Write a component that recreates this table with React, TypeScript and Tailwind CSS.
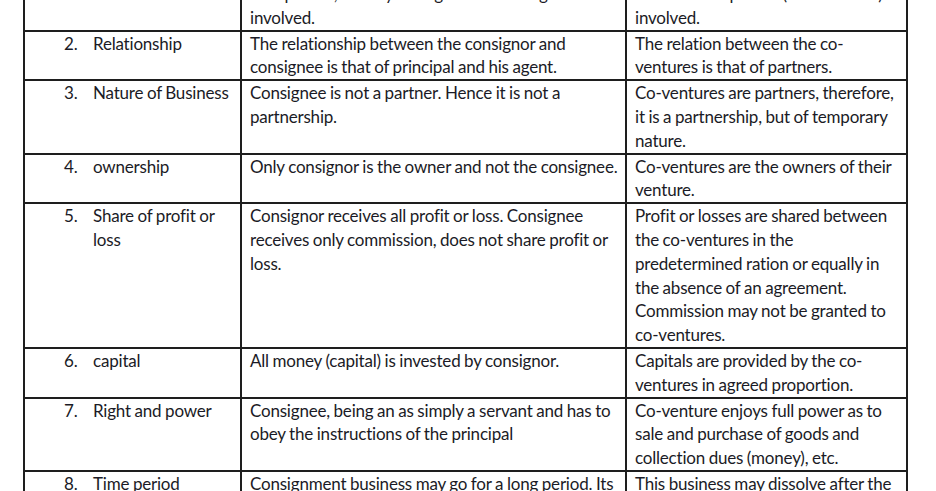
const rows: { n: string; label: string[]; a: string[]; b: string[] }[] = [
  {
    n: "1.",
    label: ["Parties", ""],
    a: ["Two parties, namely consignor and consignee are", "involved."],
    b: ["Two or more parties (co-venturers) are", "involved."],
  },
  {
    n: "2.",
    label: ["Relationship"],
    a: ["The relationship between the consignor and", "consignee is that of principal and his agent."],
    b: ["The relation between the co-", "ventures is that of partners."],
  },
  {
    n: "3.",
    label: ["Nature of Business"],
    a: ["Consignee is not a partner. Hence it is not a", "partnership."],
    b: ["Co-ventures are partners, therefore,", "it is a partnership, but of temporary", "nature."],
  },
  {
    n: "4.",
    label: ["ownership"],
    a: ["Only consignor is the owner and not the consignee."],
    b: ["Co-ventures are the owners of their", "venture."],
  },
  {
    n: "5.",
    label: ["Share of profit or", "loss"],
    a: [
      "Consignor receives all profit or loss. Consignee",
      "receives only commission, does not share profit or",
      "loss.",
    ],
    b: [
      "Profit or losses are shared between",
      "the co-ventures in the",
      "predetermined ration or equally in",
      "the absence of an agreement.",
      "Commission may not be granted to",
      "co-ventures.",
    ],
  },
  {
    n: "6.",
    label: ["capital"],
    a: ["All money (capital) is invested by consignor."],
    b: ["Capitals are provided by the co-", "ventures in agreed proportion."],
  },
  {
    n: "7.",
    label: ["Right and power"],
    a: ["Consignee, being an as simply a servant and has to", "obey the instructions of the principal"],
    b: ["Co-venture enjoys full power as to", "sale and purchase of goods and", "collection dues (money), etc."],
  },
  {
    n: "8.",
    label: ["Time period"],
    a: ["Consignment business may go for a long period. Its", "continuity is not affected."],
    b: ["This business may dissolve after the", "completion of the venture."],
  },
];

const Lines = ({ lines }: { lines: string[] }) => (
  <>
    {lines.map((l, i) => (
      <div key={i} className="whitespace-nowrap h-[23.8px]">
        {l}
      </div>
    ))}
  </>
);

export default function App() {
  return (
    <div
      className="h-[491px] w-[936px] overflow-hidden bg-white text-[#1b1b26] text-[17px] leading-[23.8px] tracking-[-0.2px] [word-spacing:-0.5px]"
      style={{ fontFamily: "Lato, 'Open Sans', sans-serif" }}
    >
      <table className="ml-[23px] -mt-[20px] w-[883px] table-fixed border-collapse">
        <colgroup>
          <col className="w-[217px]" />
          <col className="w-[385px]" />
          <col className="w-[281px]" />
        </colgroup>
        <tbody>
          {rows.map((r) => (
            <tr key={r.n}>
              <td className="border-2 border-[#1e1e1e] align-top p-0">
                <div className="flex pl-[39px]">
                  <span className="w-[29px] shrink-0">{r.n}</span>
                  <div>
                    <Lines lines={r.label} />
                  </div>
                </div>
              </td>
              <td className="border-2 border-[#1e1e1e] align-top py-0 pl-[8px] pr-1">
                <Lines lines={r.a} />
              </td>
              <td className="border-2 border-[#1e1e1e] align-top py-0 pl-[8px] pr-1">
                <Lines lines={r.b} />
              </td>
            </tr>
          ))}
        </tbody>
      </table>
    </div>
  );
}
